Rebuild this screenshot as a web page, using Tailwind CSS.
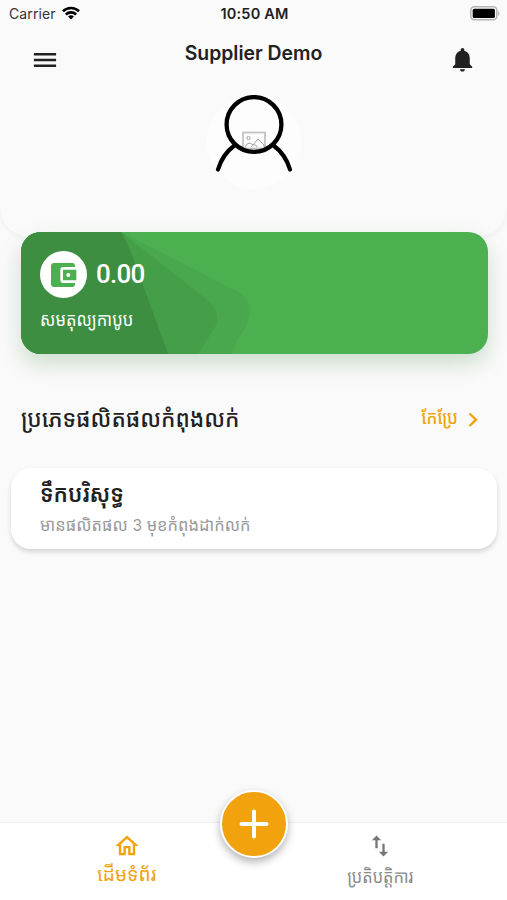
<!DOCTYPE html>
<html lang="km">
<head>
    <meta charset="UTF-8">
    <meta name="viewport" content="width=device-width, initial-scale=1.0">
    <title>Supplier Demo</title>
    <script src="https://cdn.jsdelivr.net/npm/@tailwindcss/browser@4"></script>
</head>
<body class="bg-[#fafafa] font-['Inter','Noto_Sans_Khmer','Noto_Sans',sans-serif] text-[#212121]">
<div class="w-[507px] h-[900px] flex flex-col overflow-hidden">

    <!-- Header -->
    <header class="h-[237px] shrink-0 rounded-b-[30px] bg-[#fafafa] shadow-[0_1px_6px_rgba(0,0,0,0.06)]">
        <!-- Status bar -->
        <div class="h-7 grid grid-cols-3 items-center pl-[9px] pr-[7px] text-sm leading-7">
            <div class="flex items-center gap-1.5">
                <span class="text-[#333] tracking-[0.1px]">Carrier</span>
                <svg class="w-[18px] h-[14px] -mt-0.5" viewBox="0 0 18 14" fill="none" stroke="#000" stroke-width="2.6">
                    <path d="M1 5.200a11.500 11.500 0 0 1 16 0M3.900 8.500a7.300 7.300 0 0 1 10.200 0"/>
                    <path d="M9 13.600l-2.900-3a4 4 0 0 1 5.800 0z" fill="#000" stroke="none"/>
                </svg>
            </div>
            <span class="text-center font-semibold whitespace-nowrap text-[14.5px] tracking-[0.2px]">10:50 AM</span>
            <svg class="w-[30px] h-[15px] justify-self-end -mt-0.5" viewBox="0 0 30 15">
                <rect x="0.8" y="0.8" width="26" height="13" rx="3.5" fill="none" stroke="#b5b5b5" stroke-width="1.5"/>
                <rect x="2.7" y="2.7" width="22.2" height="9.2" rx="1.5" fill="#000"/>
                <path d="M28.200 5v5c1.800-.8 1.800-4.200 0-5z" fill="#b5b5b5"/>
            </svg>
        </div>
        <!-- Title row -->
        <div class="flex justify-between items-start px-[31px]">
            <svg class="w-[28px] h-[28px] mt-[17.5px]" viewBox="0 0 24 24" fill="#212121"><path d="M2.500 18.100h19v-2.200h-19v2.200zm0-5h19v-2.200h-19v2.200zm0-7.200v2.200h19V5.900h-19z"/></svg>
            <h1 class="text-[19.4px] leading-[26px] mt-3 font-semibold">Supplier Demo</h1>
            <svg class="w-[29px] h-[29px] mt-[17px] -mr-[1px]" viewBox="0 0 24 24" fill="#212121"><path d="M12 22c1.100 0 2-.9 2-2h-4c0 1.100.89 2 2 2zm6-6v-5c0-3.070-1.640-5.640-4.500-6.320V4c0-.83-.67-1.500-1.500-1.500s-1.500.67-1.500 1.500v.68C7.630 5.360 6 7.920 6 11v5l-2 2v1h16v-1l-2-2z"/></svg>
        </div>
        <!-- Avatar -->
        <svg class="w-[94px] h-[94px] mx-auto mt-[21px]" viewBox="207 95 94 94" fill="none">
            <circle cx="254" cy="142" r="47" fill="#fdfdfd"/>
            <g stroke="#a3a3a3" stroke-width="1">
                <rect x="243" y="132.5" width="22" height="16" stroke-width="1.8" stroke="#c4c4c4"/>
                <circle cx="248.5" cy="138" r="1.6"/>
                <path d="M245 147l2-3 3-1 3 2 5-6 6 6v2M251 147c2-3 5-3 6 0"/>
            </g>
            <circle cx="254" cy="124.5" r="27.4" stroke="#000" stroke-width="4.3"/>
            <path d="M235 145C227 151 221 159 218 169.500M273 145C281 151 287 159 290 169.500" stroke="#000" stroke-width="4.2" stroke-linecap="round"/>
        </svg>
    </header>

    <!-- Wallet card -->
    <section class="relative -mt-[5px] ml-[20.5px] mr-[19.5px] h-[122px] shrink-0 rounded-[20px] bg-[#4caf50] shadow-[0_10px_22px_rgba(46,125,50,0.22)]">
        <svg class="absolute inset-0 w-full h-full rounded-[20px]" viewBox="0 0 466 122" preserveAspectRatio="none">
            <path d="M0 0H100L217 60Q232 69 227 87Q224 98 216 107L210 122H0z" fill="#49a84d"/>
            <path d="M0 0H100L186 68Q199 79 195 93L177 122H0z" fill="#459f49"/>
            <path d="M0 0H100Q106 10 110 21L147 122H0z" fill="#3e8e41"/>
        </svg>
        <div class="relative pl-[19.5px] pt-[19px] text-white">
            <div class="flex items-center gap-[9px]">
                <div class="w-[47px] h-[47px] rounded-full bg-white flex items-center justify-center">
                    <svg class="w-8 h-8 -ml-px" viewBox="0 0 24 24" fill="#4caf50"><path d="M21 18v1c0 1.100-.9 2-2 2H5c-1.110 0-2-.9-2-2V5c0-1.100.89-2 2-2h14c1.100 0 2 .9 2 2v1h-9c-1.110 0-2 .9-2 2v8c0 1.100.89 2 2 2h9zm-9-2h10V8H12v8zm4-2.500c-.83 0-1.500-.67-1.500-1.500s.67-1.500 1.500-1.500 1.500.67 1.500 1.500-.67 1.500-1.500 1.500z"/></svg>
                </div>
                <span class="font-['Roboto'] text-[26px] font-medium tracking-[-0.8px]">0.00</span>
            </div>
            <p class="mt-[7px] text-[16.6px] leading-7 scale-y-110">សមតុល្យកាបូប</p>
        </div>
    </section>

    <!-- Product categories -->
    <div class="mt-[44px] h-10 shrink-0 flex items-center justify-between pl-[21px] pr-6">
        <h2 class="text-[22.2px] leading-10 font-medium whitespace-nowrap scale-y-110">ប្រភេទផលិតផលកំពុងលក់</h2>
        <a href="#" class="flex items-center gap-[5px] text-[16.8px] font-medium text-[#f2a20c]">
            <span class="scale-y-110">កែប្រែ</span>
            <svg class="w-5 h-5 mt-0.5" viewBox="0 0 20 20" fill="none" stroke="#f2a20c" stroke-width="2.4"><path d="M6.500 4.500l6.500 6.200L6.500 17"/></svg>
        </a>
    </div>

    <section class="mt-[30px] ml-[11px] mr-[10px] h-[81px] shrink-0 rounded-[20px] bg-white pl-[29px] pt-[7px] shadow-[0_3px_5px_rgba(0,0,0,0.15)]">
        <h3 class="text-[21.7px] leading-9 font-semibold scale-y-110">ទឹកបរិសុទ្ធ</h3>
        <p class="mt-px text-[16.5px] leading-[27px] text-[#9a9a9a] scale-y-105">មានផលិតផល <span class="text-[15.5px]">3</span> មុខកំពុងដាក់លក់</p>
    </section>

    <!-- Bottom navigation -->
    <nav class="relative mt-auto h-[78px] shrink-0 grid grid-cols-2 bg-white border-t border-[#f0f0f0]">
        <a href="#" class="flex flex-col items-center pt-[9px] text-[#f2a20c]">
            <svg class="w-[28px] h-[28px]" viewBox="0 0 24 24" fill="currentColor"><path d="M12 5.690l5 4.500V18h-2v-6H9v6H7v-7.810l5-4.500M12 3L2 12h3v8h6v-6h2v6h6v-8h3L12 3z"/></svg>
            <span class="text-[19.2px] leading-7">ដើមទំព័រ</span>
        </a>
        <a href="#" class="flex flex-col items-center pt-[9px] text-[#777]">
            <svg class="w-[28px] h-[28px]" viewBox="0 0 24 24" fill="currentColor"><path d="M9 3L5 6.990h3V14h2V6.990h3L9 3zm7 14.010V10h-2v7.010h-3L15 21l4-3.990h-3z"/></svg>
            <span class="text-[16.4px] leading-8 text-[#8a8a8a] scale-y-110">ប្រតិបត្តិការ</span>
        </a>
        <button class="absolute left-[220px] -top-[33px] w-[68px] h-[68px] rounded-full bg-[#f2a20c] border-2 border-white shadow-[0_4px_9px_rgba(0,0,0,0.3)] flex items-center justify-center">
            <svg class="w-[30px] h-[30px]" viewBox="0 0 30 30" stroke="#fff" stroke-width="4" stroke-linecap="round"><path d="M15 2.500v25M2.500 15h25"/></svg>
        </button>
    </nav>
</div>
</body>
</html>
